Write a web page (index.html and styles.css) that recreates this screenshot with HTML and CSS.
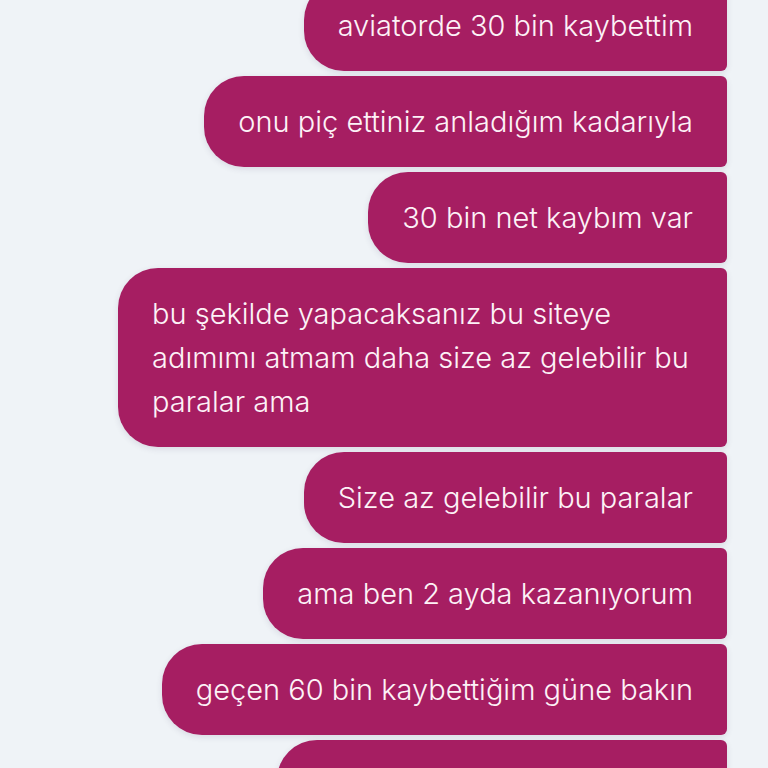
FILE: index.html
```html
<!DOCTYPE html>
<html lang="tr">
<head>
  <meta charset="UTF-8" />
  <meta name="viewport" content="width=device-width, initial-scale=1.0"/>
  <title>Sohbet</title>
  <link rel="stylesheet" href="styles.css">
</head>
<body>

<div class="chat">
  <div class="msg">aviatorde 30 bin kaybettim</div>
  <div class="msg">onu piç ettiniz anladığım kadarıyla</div>
  <div class="msg">30 bin net kaybım var</div>
  <div class="msg">bu şekilde yapacaksanız bu siteye<br>adımımı atmam daha size az gelebilir bu paralar ama</div>
  <div class="msg">Size az gelebilir bu paralar</div>
  <div class="msg">ama ben 2 ayda kazanıyorum</div>
  <div class="msg">geçen 60 bin kaybettiğim güne bakın</div>
  <div class="msg">bu kadar kayıp olmaz ki ama</div>
</div>

</body>
</html>
```

FILE: styles.css
```css
body {
  margin: 0;
  height: 768px;
  font-family: 'Inter', 'Noto Sans', sans-serif;
  background: #eff3f7;
  color: #fdf2f7;
  overflow: hidden;
}

.chat {
  display: flex;
  flex-direction: column;
  align-items: flex-end;
  gap: 5px;
  margin-top: -20px;
  padding-right: 41px;
}

.msg {
  box-sizing: border-box;
  max-width: 609px;
  padding: 23.5px 34px;
  background: #a61e62;
  border-radius: 40px 6px 6px 40px;
  font-size: 29px;
  font-weight: 300;
  line-height: 44px;
  box-shadow: 0 2px 6px rgba(60, 40, 80, 0.12);
}
```
